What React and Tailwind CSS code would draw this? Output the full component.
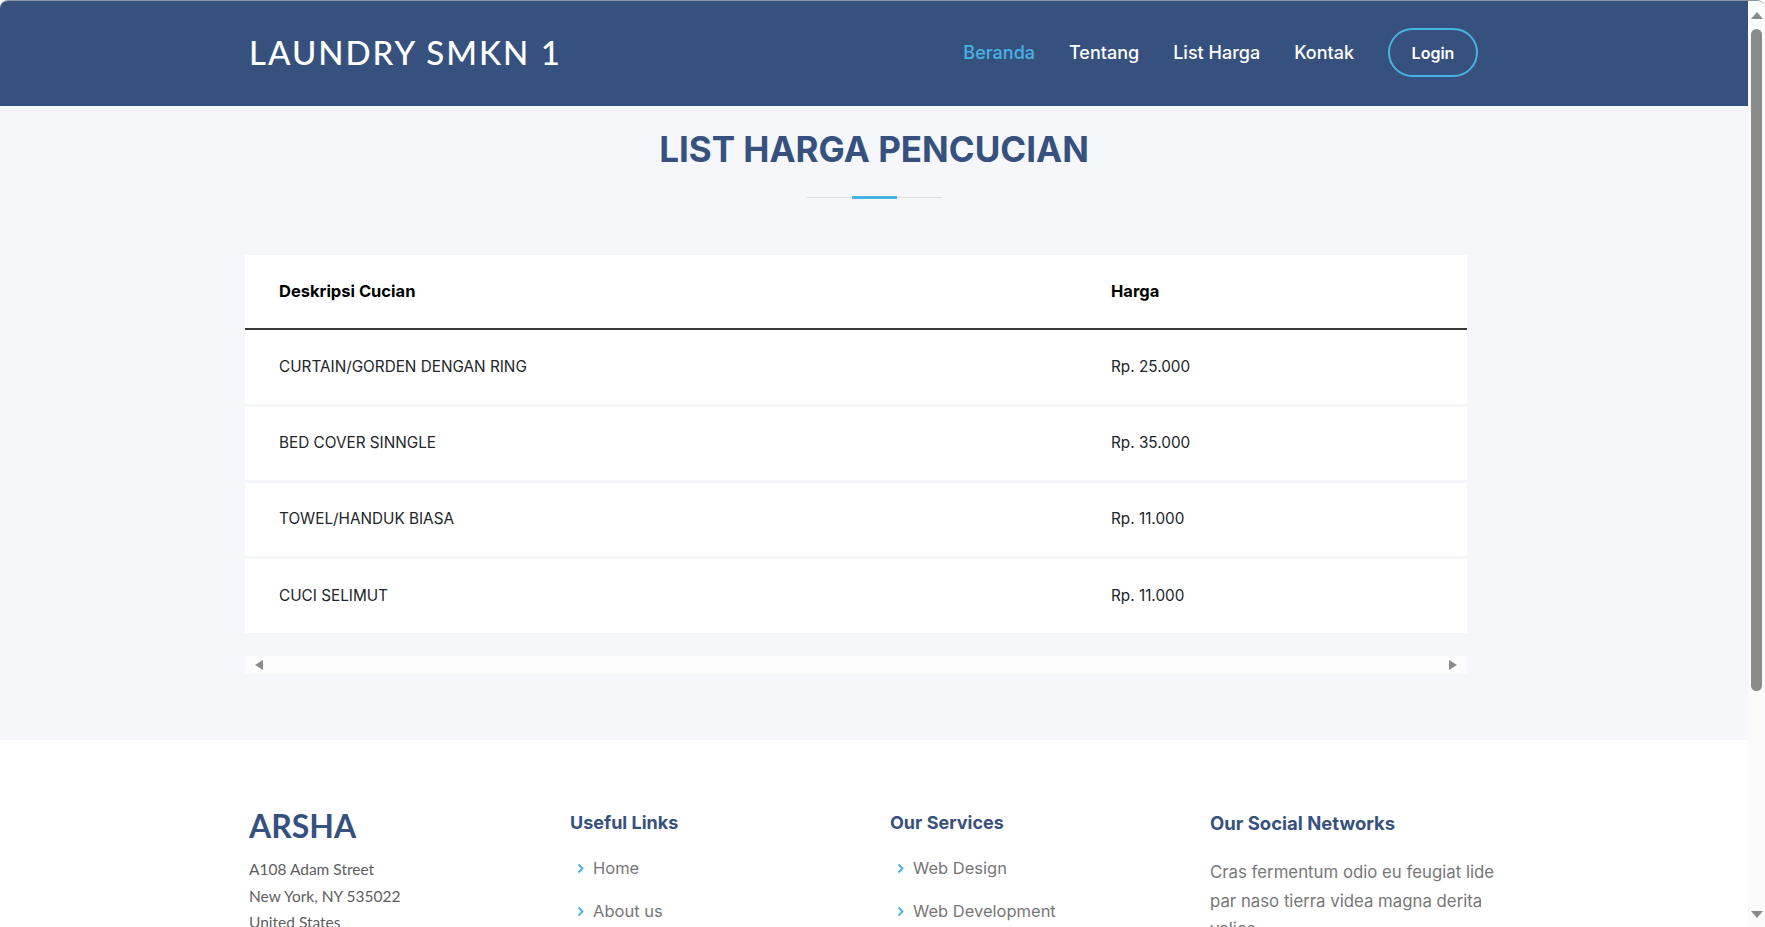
import React from 'react'

const prices = [
  { name: 'CURTAIN/GORDEN DENGAN RING', price: 'Rp. 25.000' },
  { name: 'BED COVER SINNGLE', price: 'Rp. 35.000' },
  { name: 'TOWEL/HANDUK BIASA', price: 'Rp. 11.000' },
  { name: 'CUCI SELIMUT', price: 'Rp. 11.000' },
]

const navLinks = ['Beranda', 'Tentang', 'List Harga', 'Kontak']

function Chevron() {
  return (
    <svg width="9" height="11" viewBox="0 0 9 11" className="shrink-0">
      <path d="M2.5 1.5 L6.5 5.5 L2.5 9.5" fill="none" stroke="#47b2e4" strokeWidth="1.8" />
    </svg>
  )
}

function Header() {
  return (
    <header className="h-[105px] bg-[#37517e] flex items-center pb-[2px]">
      <div className="ml-[249px] w-[1229px] flex items-center justify-between">
        <h1 className="font-['Lato',sans-serif] text-[33px] font-medium tracking-[2px] text-white leading-none">
          LAUNDRY SMKN 1
        </h1>
        <nav className="flex items-center">
          {navLinks.map((l, i) => (
            <a
              key={l}
              className={`ml-[34px] text-[18px] font-medium ${i === 0 ? 'text-[#47b2e4]' : 'text-white'}`}
            >
              {l}
            </a>
          ))}
          <a className="ml-[34px] h-[49px] w-[90px] flex items-center justify-center rounded-full border-2 border-[#47b2e4] text-white text-[16px] font-semibold">
            Login
          </a>
        </nav>
      </div>
    </header>
  )
}

function PriceSection() {
  return (
    <section className="bg-[#f5f7fb] pt-[22px] pb-[66px]">
      <div className="flex flex-col items-center">
        <h2 className="text-[35px] leading-[43px] font-bold text-[#37517e] uppercase">List Harga Pencucian</h2>
        <div className="relative mt-[25px] w-[135px] h-[3px]">
          <div className="absolute left-0 right-0 top-[1px] h-px bg-[#dddddd]" />
          <div className="absolute left-[45px] w-[45px] h-[3px] bg-[#47b2e4]" />
        </div>
      </div>

      <div className="ml-[245px] w-[1222px] mt-[56px]">
        <table className="w-full bg-white border-collapse text-left">
          <thead>
            <tr className="h-[74px] border-b-2 border-[#3a3a3a]">
              <th className="w-[832px] pl-[34px] text-[16.5px] font-bold text-black">Deskripsi Cucian</th>
              <th className="pl-[34px] text-[16.5px] font-bold text-black">Harga</th>
            </tr>
          </thead>
          <tbody>
            {prices.map((p, i) => (
              <tr
                key={p.name}
                className={`h-[76px] ${i < prices.length - 1 ? 'border-b-[3px] border-[#f5f7fb]' : ''}`}
              >
                <td className="pl-[34px] pt-[1px] text-[15.3px] text-[#212529]">{p.name}</td>
                <td className="pl-[34px] pt-[1px] text-[15.3px] text-[#212529]">{p.price}</td>
              </tr>
            ))}
          </tbody>
        </table>

        {/* table-responsive scroll bar */}
        <div className="mt-[23px] h-[18px] bg-[#fcfcfd] flex items-center justify-between px-[10px]">
          <span className="w-0 h-0 border-y-[5px] border-y-transparent border-r-[8px] border-r-[#8a8a8a]" />
          <span className="w-0 h-0 border-y-[5px] border-y-transparent border-l-[8px] border-l-[#8a8a8a]" />
        </div>
      </div>
    </section>
  )
}

function Footer() {
  return (
    <footer className="bg-white pt-[66px]">
      <div className="ml-[249px] grid grid-cols-[321px_320px_320px_320px]">
        <div>
          <h3 className="mt-[2px] font-['Lato',sans-serif] text-[32px] leading-[36px] font-bold text-[#37517e] mb-[12px]">ARSHA</h3>
          <p className="font-['Lato',sans-serif] text-[15.5px] leading-[26.5px] text-[#5e5e5e]">
            A108 Adam Street
            <br />
            New York, NY 535022
            <br />
            United States
          </p>
        </div>
        <div>
          <h4 className="text-[18px] leading-[30px] font-bold text-[#37517e] mt-[2px]">Useful Links</h4>
          <ul className="mt-[18px] flex flex-col gap-[19px]">
            {['Home', 'About us', 'Services'].map((l) => (
              <li key={l} className="flex items-center gap-[8px] pl-[6px] text-[16.5px] leading-[24px] text-[#777777]">
                <Chevron />
                {l}
              </li>
            ))}
          </ul>
        </div>
        <div>
          <h4 className="text-[18px] leading-[30px] font-bold text-[#37517e] mt-[2px]">Our Services</h4>
          <ul className="mt-[18px] flex flex-col gap-[19px]">
            {['Web Design', 'Web Development', 'Product Management'].map((l) => (
              <li key={l} className="flex items-center gap-[8px] pl-[6px] text-[16.5px] leading-[24px] text-[#777777]">
                <Chevron />
                {l}
              </li>
            ))}
          </ul>
        </div>
        <div>
          <h4 className="text-[18.5px] leading-[30px] font-bold text-[#37517e] mt-[2px]">Our Social Networks</h4>
          <p className="mt-[20px] w-[310px] text-[16.8px] leading-[28.5px] text-[#777777]">
            Cras fermentum odio eu feugiat lide par naso tierra videa magna derita valies
          </p>
        </div>
      </div>
    </footer>
  )
}

function WindowScrollbar() {
  return (
    <div className="w-[17px] shrink-0 bg-[#fafafa] flex flex-col items-center">
      <span className="mt-[11px] w-0 h-0 border-x-[6px] border-x-transparent border-b-[7px] border-b-[#8a8a8a]" />
      <div className="mt-[10px] w-[11px] h-[662px] rounded-full bg-[#8a8a8a]" />
      <div className="flex-1" />
      <span className="mb-[9px] w-0 h-0 border-x-[6px] border-x-transparent border-t-[7px] border-t-[#8a8a8a]" />
    </div>
  )
}

export default function App() {
  return (
    <div className="h-[927px] flex overflow-hidden rounded-t-[8px] border-t border-[#8f959e] bg-white font-['Inter',sans-serif]">
      <div className="flex-1 min-w-0 overflow-hidden">
        <Header />
        <PriceSection />
        <Footer />
      </div>
      <WindowScrollbar />
    </div>
  )
}
